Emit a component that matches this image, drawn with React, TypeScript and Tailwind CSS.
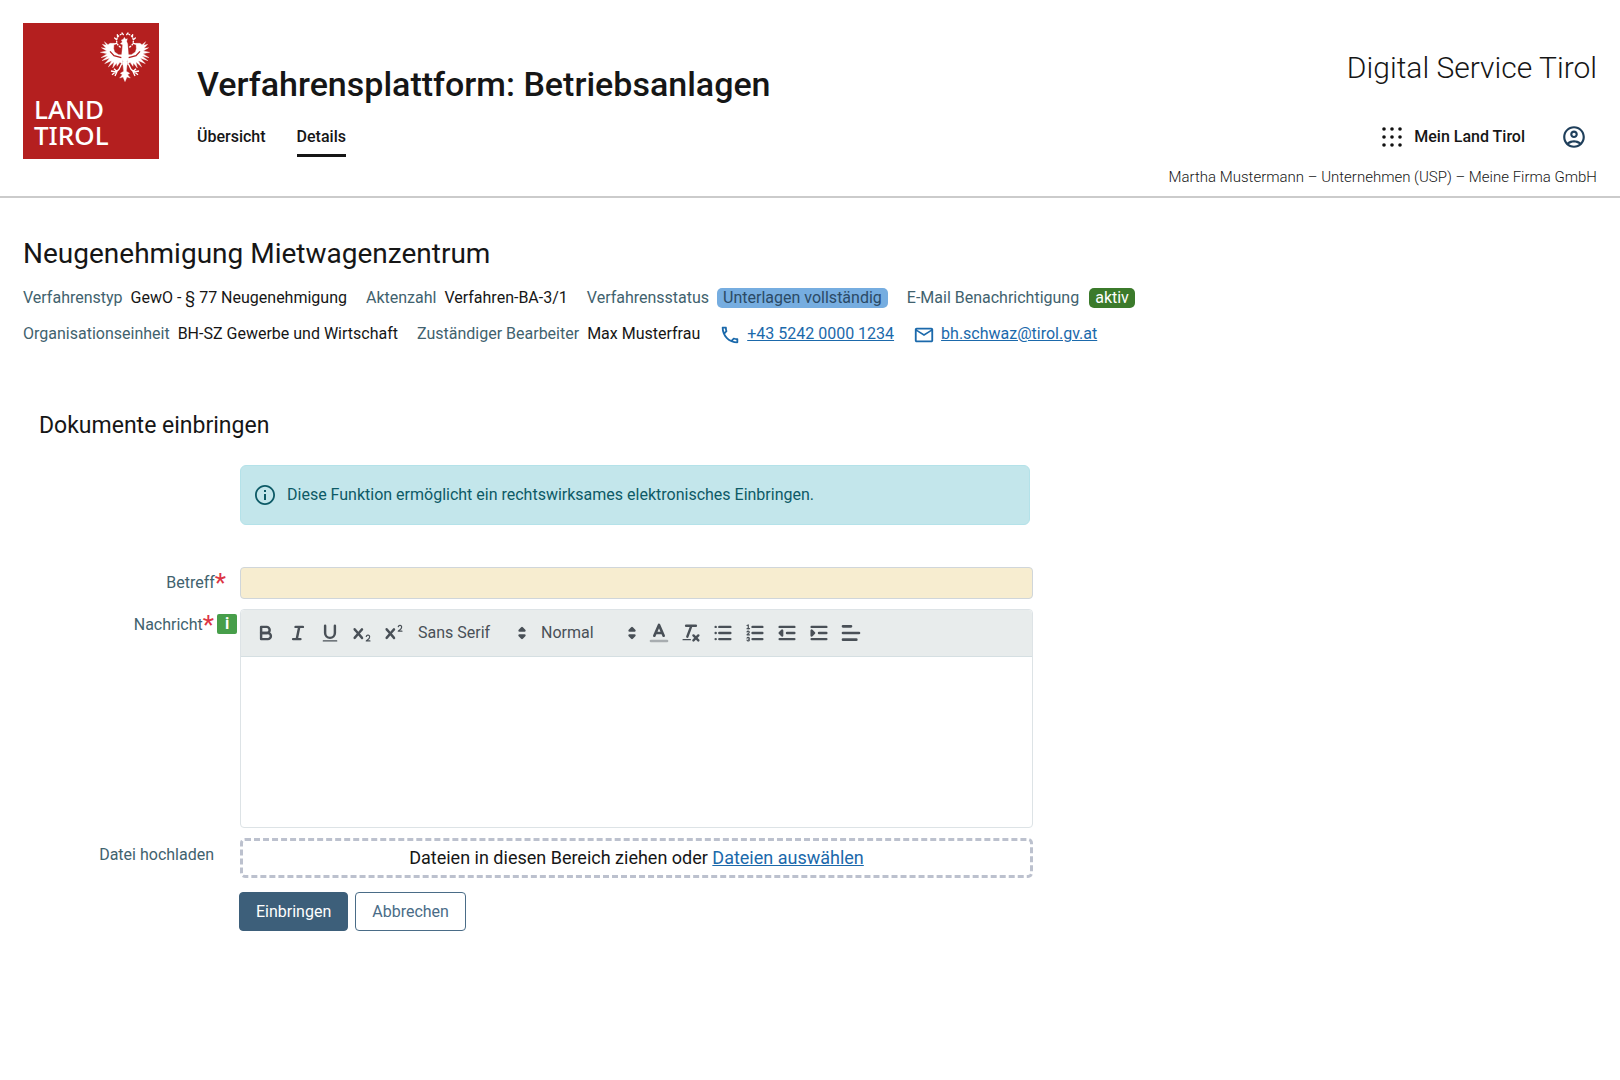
import type { ReactNode } from 'react';

const META_LABEL = 'text-[#41626e]';

function Eagle() {
  return (
    <svg viewBox="30 22 150 150" className="size-[50px]" fill="#fff" stroke="#fff" aria-hidden="true">
      {/* wreath */}
      <path
        d="M92 68 C83 63 79 54 80 45 C82 36 87 31 95 28 M118 68 C127 63 131 54 130 45 C128 36 123 31 115 28"
        fill="none"
        strokeWidth="4"
        strokeDasharray="6 3"
      />
      <path
        d="M80 45 l-6 -5 M83 37 l-1 -7 M80 56 l-7 2 M96 25 l4 5 M130 45 l6 -5 M127 37 l1 -7 M130 56 l7 2 M114 25 l-4 5"
        strokeWidth="4"
        strokeLinecap="round"
      />
      {/* head and crown */}
      <path d="M94 46 L100 44 L103 38 L107 44 L112 42 L110 50 L113 58 L116 100 L105 122 L94 100 L98 60 L91 57 L97 52 Z" strokeWidth="1" />
      {/* wings */}
      <path
        d="M98 90 L86 90 L74 82 L71 72 L72 56 L60 56 L54 60 L43 51 L49 62 L37 59 L48 71 L34 69 L50 79 L31 83 L51 87 L33 99 L54 94 L36 108 L59 101 L44 117 L65 108 L55 127 L72 112 L68 130 L80 115 L81 125 L90 113 L98 120 Z"
        strokeWidth="1"
      />
      <path
        d="M112 90 L124 90 L136 82 L139 72 L138 56 L150 56 L156 60 L167 51 L161 62 L173 59 L162 71 L176 69 L160 79 L179 83 L159 87 L177 99 L156 94 L174 108 L151 101 L166 117 L145 108 L155 127 L138 112 L142 130 L130 115 L129 125 L120 113 L112 120 Z"
        strokeWidth="1"
      />
      <path d="M60 80 L72 93 L94 99 M150 80 L138 93 L116 99" fill="none" stroke="#b41f1f" strokeWidth="4" />
      {/* legs */}
      <path
        d="M95 117 L87 134 L78 142 L63 139 M83 137 L66 150 M82 138 L75 154 M80 140 L72 132 M115 117 L123 134 L132 142 L147 139 M127 137 L144 150 M128 138 L135 154 M130 140 L138 132"
        fill="none"
        strokeWidth="4"
      />
      {/* tail */}
      <path d="M98 112 L112 112 L109 140 L119 146 L113 150 L121 160 L111 157 L105 171 L99 157 L89 160 L97 150 L91 146 L101 140 Z" strokeWidth="1" />
    </svg>
  );
}

function Logo() {
  return (
    <a href="#" aria-label="Land Tirol" className="flex size-[136px] shrink-0 flex-col justify-between bg-[#b41f1f] pt-[9px] pr-[9px] pb-[11px] pl-[11px]">
      <span className="self-end">
        <Eagle />
      </span>
      <span className="font-['Noto_Sans',sans-serif] text-[26px] leading-[26px] font-medium text-white">
        LAND
        <br />
        TIROL
      </span>
    </a>
  );
}

function AppsIcon() {
  return (
    <svg viewBox="0 0 24 24" className="size-6" aria-hidden="true">
      {[4, 12, 20].map((y) => [4, 12, 20].map((x) => <circle key={`${x}-${y}`} cx={x} cy={y} r="1.8" fill="#111" />))}
    </svg>
  );
}

function UserIcon() {
  return (
    <svg viewBox="0 0 24 24" className="size-[26px]" fill="#1f3f5b" aria-hidden="true">
      <path d="M12 2C6.48 2 2 6.48 2 12s4.48 10 10 10 10-4.48 10-10S17.52 2 12 2zM7.35 18.5C8.66 17.56 10.26 17 12 17s3.34.56 4.65 1.5C15.34 19.44 13.74 20 12 20s-3.34-.56-4.65-1.5zm10.79-1.38C16.45 15.8 14.32 15 12 15s-4.45.8-6.14 2.12C4.7 15.73 4 13.95 4 12c0-4.42 3.58-8 8-8s8 3.58 8 8c0 1.95-.7 3.73-1.86 5.12z" />
      <path d="M12 6c-1.93 0-3.5 1.57-3.5 3.5S10.07 13 12 13s3.5-1.57 3.5-3.5S13.93 6 12 6zm0 5c-.83 0-1.5-.67-1.5-1.5S11.17 8 12 8s1.5.67 1.5 1.5S12.83 11 12 11z" />
    </svg>
  );
}

function PhoneIcon() {
  return (
    <svg viewBox="0 0 24 24" className="size-[22px]" fill="#1b69ab" aria-hidden="true">
      <path d="M6.54 5c.06.89.21 1.76.45 2.59l-1.2 1.2c-.41-1.2-.67-2.47-.76-3.79h1.51m9.86 12.02c.85.24 1.72.39 2.6.45v1.49c-1.32-.09-2.59-.35-3.8-.75l1.2-1.19M7.5 3H4c-.55 0-1 .45-1 1 0 9.39 7.61 17 17 17 .55 0 1-.45 1-1v-3.49c0-.55-.45-1-1-1-1.24 0-2.45-.2-3.57-.57-.1-.04-.21-.05-.31-.05-.26 0-.51.1-.71.29l-2.2 2.2c-2.83-1.45-5.15-3.76-6.59-6.59l2.2-2.2c.28-.28.36-.67.25-1.02C8.7 6.45 8.5 5.25 8.5 4c0-.55-.45-1-1-1z" />
    </svg>
  );
}

function MailIcon() {
  return (
    <svg viewBox="0 0 24 24" className="size-[22px]" fill="#1b69ab" aria-hidden="true">
      <path d="M22 6c0-1.1-.9-2-2-2H4c-1.1 0-2 .9-2 2v12c0 1.1.9 2 2 2h16c1.1 0 2-.9 2-2V6zm-2 0l-8 5-8-5h16zm0 12H4V8l8 5 8-5v10z" />
    </svg>
  );
}

function InfoIcon() {
  return (
    <svg viewBox="0 0 24 24" className="size-6 shrink-0" fill="#0d5a66" aria-hidden="true">
      <path d="M11 7h2v2h-2zm0 4h2v6h-2zm1-9C6.48 2 2 6.48 2 12s4.48 10 10 10 10-4.48 10-10S17.52 2 12 2zm0 18.2c-4.52 0-8.2-3.68-8.2-8.2S7.48 3.8 12 3.8s8.2 3.68 8.2 8.2-3.68 8.2-8.2 8.2z" />
    </svg>
  );
}

const SCRIPT_X =
  'M9.65,5.241a1,1,0,0,0-1.409.108L6,7.964,3.759,5.349A1,1,0,0,0,2.192,6.59178Q2.21541,6.6213,2.241,6.649L4.684,9.5,2.241,12.35A1,1,0,0,0,3.71,13.70722q0.02557-.02768.049-0.05722L6,11.036,8.241,13.65a1,1,0,1,0,1.567-1.24277Q9.78459,12.3777,9.759,12.35L7.316,9.5,9.759,6.651A1,1,0,0,0,9.65,5.241Z';
const SCRIPT_TWO =
  'M15.5,15H13.861a3.858,3.858,0,0,0,1.914-2.975,1.8,1.8,0,0,0-1.6-1.751A1.921,1.921,0,0,0,12.021,11.7a0.50013,0.50013,0,1,0,.957.291h0a0.914,0.914,0,0,1,1.053-.725,0.81,0.81,0,0,1,.744.762c0,1.076-1.16971,1.86982-1.93971,2.43082A1.45639,1.45639,0,0,0,12,15.5a0.5,0.5,0,0,0,.5.5h3A0.5,0.5,0,0,0,15.5,15Z';

function ToolButton({ label, large, children }: { label: string; large?: boolean; children: ReactNode }) {
  return (
    <button type="button" aria-label={label} className="flex h-8 w-8 shrink-0 items-center justify-center">
      <svg
        viewBox="0 0 18 18"
        className={large ? 'size-6' : 'size-[22px]'}
        fill="none"
        stroke="#495057"
        strokeWidth="2"
        strokeLinecap="round"
        strokeLinejoin="round"
        aria-hidden="true"
      >
        {children}
      </svg>
    </button>
  );
}

function ToolSelect({ label, value, className }: { label: string; value: string; className: string }) {
  return (
    <div className={`grid shrink-0 items-center ${className}`}>
      <select
        aria-label={label}
        className="col-start-1 row-start-1 h-8 w-full appearance-none bg-transparent text-[16px] text-[#495057]"
      >
        <option>{value}</option>
      </select>
      <svg
        viewBox="0 0 18 18"
        className="pointer-events-none col-start-1 row-start-1 size-[22px] justify-self-end"
        fill="#495057"
        stroke="#495057"
        strokeWidth="2"
        strokeLinejoin="round"
        aria-hidden="true"
      >
        <polygon points="7 11 9 13 11 11 7 11" />
        <polygon points="7 7 9 5 11 7 7 7" />
      </svg>
    </div>
  );
}

function Toolbar() {
  return (
    <div role="toolbar" className="flex h-[47px] items-center rounded-t border-b border-[#d5dfe2] bg-[#e8ecec] pl-[9px]">
      <ToolButton label="Fett">
        <path d="M5,4H9.5A2.5,2.5,0,0,1,12,6.5v0A2.5,2.5,0,0,1,9.5,9H5Z" />
        <path d="M5,9h5.5A2.5,2.5,0,0,1,13,11.5v0A2.5,2.5,0,0,1,10.5,14H5Z" />
      </ToolButton>
      <ToolButton label="Kursiv">
        <path d="M7,4H13M5,14H11M8,14L10,4" />
      </ToolButton>
      <ToolButton label="Unterstrichen">
        <path d="M5,3V9a4.012,4.012,0,0,0,4,4H9a4.012,4.012,0,0,0,4-4V3" />
        <rect x="3" y="15" width="12" height="1" rx="0.5" fill="#495057" stroke="none" />
      </ToolButton>
      <ToolButton label="Tiefgestellt">
        <path d={SCRIPT_X} fill="#495057" stroke="none" />
        <path d={SCRIPT_TWO} fill="#495057" stroke="none" />
      </ToolButton>
      <ToolButton label="Hochgestellt">
        <path d={SCRIPT_X} fill="#495057" stroke="none" />
        <path d={SCRIPT_TWO} fill="#495057" stroke="none" transform="translate(0 -8)" />
      </ToolButton>
      <ToolSelect label="Schriftart" value="Sans Serif" className="ml-2 w-[115px]" />
      <ToolSelect label="Textgröße" value="Normal" className="ml-2 w-[102px]" />
      <ToolButton label="Textfarbe" large>
        <path d="M3,15H15" opacity="0.4" />
        <path d="M5.5,11L9,3L12.5,11M11.63,9H6.38" />
      </ToolButton>
      <ToolButton label="Formatierung entfernen">
        <path d="M5,3H13M6,12L9.35,3M11,11L15,15M15,11L11,15" />
        <rect x="2" y="14" width="7" height="1" rx="0.5" fill="#495057" stroke="none" />
      </ToolButton>
      <ToolButton label="Aufzählung">
        <path d="M6,4H15M6,9H15M6,14H15M3,4H3.01M3,9H3.01M3,14H3.01" />
      </ToolButton>
      <ToolButton label="Nummerierung">
        <path d="M7,4H15M7,9H15M7,14H15" />
        <path
          d="M2.5,5.5H4.5M4.5,10.5h-2c0-.234,1.85-1.076,1.85-2.234A0.959,0.959,0,0,0,2.5,8.156M2.5,14.846a0.959,0.959,0,0,0,1.85-.109A0.7,0.7,0,0,0,3.75,14a0.688,0.688,0,0,0,.6-0.736,0.959,0.959,0,0,0-1.85-.109"
          strokeWidth="1"
        />
        <path
          d="M3.5,6A0.5,0.5,0,0,1,3,5.5V3.085l-0.276.138A0.5,0.5,0,0,1,2.053,3c-0.124-.247-0.023-0.324.224-0.447l1-.5A0.5,0.5,0,0,1,4,2.5v3A0.5,0.5,0,0,1,3.5,6Z"
          fill="#495057"
          stroke="none"
        />
      </ToolButton>
      <ToolButton label="Einzug verkleinern">
        <path d="M3,14H15M3,4H15M9,9H15" />
        <path d="M5,7V11L3,9Z" fill="#495057" />
      </ToolButton>
      <ToolButton label="Einzug vergrößern">
        <path d="M3,14H15M3,4H15M9,9H15" />
        <path d="M3,7V11L5,9Z" fill="#495057" />
      </ToolButton>
      <ToolButton label="Ausrichtung" large>
        <path d="M3,9H15M3,14H13M3,4H9" />
      </ToolButton>
    </div>
  );
}

function Required() {
  return (
    <span className="text-[26px] leading-6 text-[#dc3545]" aria-hidden="true">
      *
    </span>
  );
}

export default function App() {
  return (
    <div className="min-h-screen bg-white font-[Roboto,sans-serif] text-[16px] leading-6 text-[#161616]">
      <header className="flex justify-between border-b-2 border-[#cbcbcb] px-[23px] pt-[23px]">
        <div className="flex pb-[37px]">
          <Logo />
          <div className="pt-10 pl-[38px]">
            <h1 className="text-[34px] leading-[42px] font-medium">Verfahrensplattform: Betriebsanlagen</h1>
            <nav className="mt-5 flex gap-[31px] font-medium">
              <a href="#">Übersicht</a>
              <a href="#" aria-current="page" className="border-b-[3px] border-[#161616] pb-[5px]">
                Details
              </a>
            </nav>
          </div>
        </div>
        <div className="flex flex-col items-end pt-[25px]">
          <p className="text-[30px] leading-10 font-light">Digital Service Tirol</p>
          <div className="mt-9 flex items-center">
            <button type="button" className="flex items-center gap-[10px] font-medium">
              <AppsIcon />
              Mein Land Tirol
            </button>
            <button type="button" aria-label="Benutzerkonto" className="mr-[10px] ml-9">
              <UserIcon />
            </button>
          </div>
          <p className="mt-[15px] text-[15px] leading-6 font-light">Martha Mustermann – Unternehmen (USP) – Meine Firma GmbH</p>
        </div>
      </header>

      <main className="px-[23px] pt-9">
        <h2 className="text-[28px] leading-10">Neugenehmigung Mietwagenzentrum</h2>

        <dl className="mt-3 flex flex-wrap gap-x-[19px]">
          <div className="flex gap-2">
            <dt className={META_LABEL}>Verfahrenstyp</dt>
            <dd>GewO - § 77 Neugenehmigung</dd>
          </div>
          <div className="flex gap-2">
            <dt className={META_LABEL}>Aktenzahl</dt>
            <dd>Verfahren-BA-3/1</dd>
          </div>
          <div className="flex items-center gap-2">
            <dt className={META_LABEL}>Verfahrensstatus</dt>
            <dd className="rounded-[5px] bg-[#76ade0] px-[6px] leading-5 text-[#2b4a66]">Unterlagen vollständig</dd>
          </div>
          <div className="flex items-center gap-[10px]">
            <dt className={META_LABEL}>E-Mail Benachrichtigung</dt>
            <dd className="rounded-[5px] bg-[#3b7a2b] px-[6px] leading-5 text-white">aktiv</dd>
          </div>
        </dl>
        <dl className="mt-3 flex flex-wrap gap-x-[19px]">
          <div className="flex gap-2">
            <dt className={META_LABEL}>Organisationseinheit</dt>
            <dd>BH-SZ Gewerbe und Wirtschaft</dd>
          </div>
          <div className="flex gap-2">
            <dt className={META_LABEL}>Zuständiger Bearbeiter</dt>
            <dd className="flex">
              Max Musterfrau
              <a href="tel:+43524200001234" className="ml-[19px] flex items-start gap-[6px] text-[#1b69ab] underline">
                <span className="pt-[2px]">
                  <PhoneIcon />
                </span>
                +43 5242 0000 1234
              </a>
              <a href="mailto:bh.schwaz@tirol.gv.at" className="ml-[19px] flex items-start gap-[6px] text-[#1b69ab] underline">
                <span className="pt-[2px]">
                  <MailIcon />
                </span>
                bh.schwaz@tirol.gv.at
              </a>
            </dd>
          </div>
        </dl>

        <h3 className="mt-16 pl-4 text-[23px] leading-8">Dokumente einbringen</h3>

        <form className="mt-[23px] grid max-w-[1010px] grid-cols-[217px_1fr]" onSubmit={(e) => e.preventDefault()}>
          <div className="col-start-2 mr-[3px] flex h-[60px] items-center gap-[10px] rounded-md border border-[#b4e2e9] bg-[#c3e6eb] px-3 text-[#0d5a66]">
            <InfoIcon />
            <p>Diese Funktion ermöglicht ein rechtswirksames elektronisches Einbringen.</p>
          </div>

          <label htmlFor="subject" className="mt-[46px] flex justify-end pr-[14px] text-[#41626e]">
            Betreff
            <Required />
          </label>
          <input id="subject" type="text" required className="mt-[42px] h-8 rounded border border-[#d0d6da] bg-[#f7edd0] px-3" />

          <div className="mt-[13px] flex items-start justify-end pr-[3px] text-[#41626e]">
            <label htmlFor="message" className="flex pt-px">
              Nachricht
              <Required />
            </label>
            <button type="button" aria-label="Hilfe" className="mt-[2px] ml-[3px] size-5 rounded-[2px] bg-[#479e4a] leading-5 font-bold text-white">
              i
            </button>
          </div>
          <div className="mt-[10px] rounded border border-[#dde3e6]">
            <Toolbar />
            <textarea id="message" className="block h-[170px] w-full resize-none px-4 py-3" />
          </div>

          <span id="upload-label" className="mt-[15px] flex justify-end pr-[26px] text-[#41626e]">
            Datei hochladen
          </span>
          <div className="mt-[10px] flex h-10 items-center justify-center rounded-[5px] border-[3px] border-dashed border-[#bcc1ce] text-[18px]">
            <p>
              Dateien in diesen Bereich ziehen oder{' '}
              <a href="#" aria-describedby="upload-label" className="text-[#1b69ab] underline">
                Dateien auswählen
              </a>
            </p>
          </div>

          <div className="col-start-2 mt-[14px] -ml-px flex gap-[7px]">
            <button type="submit" className="h-[39px] rounded border border-[#3d5f7a] bg-[#3d5f7a] px-4 text-white">
              Einbringen
            </button>
            <button type="button" className="h-[39px] rounded border border-[#4a6c87] bg-white px-4 text-[#4a6c87]">
              Abbrechen
            </button>
          </div>
        </form>
      </main>
    </div>
  );
}
